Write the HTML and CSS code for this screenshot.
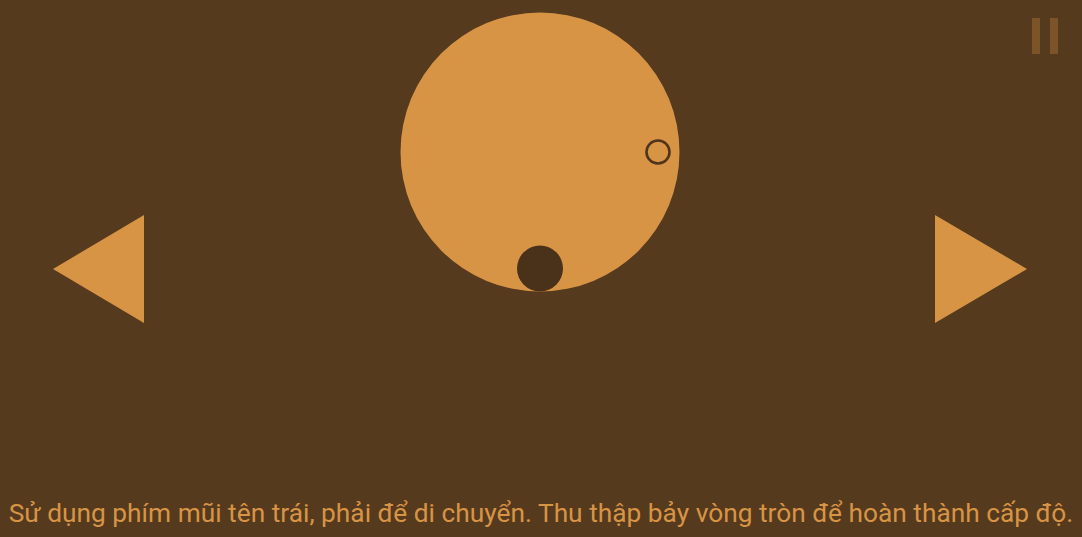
FILE: index.html
```html
<!DOCTYPE html>
<html lang="vi">
<head>
<meta charset="utf-8">
<title>Game</title>
<link rel="stylesheet" href="styles.css">
</head>
<body>
<div class="screen">
  <div class="stage">
    <svg class="board" width="1082" height="490" viewBox="0 0 1082 490">
      <circle cx="540" cy="152" r="139.5" fill="#d89445"/>
      <circle cx="658" cy="152" r="11.5" fill="none" stroke="#4f341b" stroke-width="2.6"/>
      <circle cx="540" cy="268.5" r="23" fill="#4a3119"/>
      <polygon points="53,269 144,215 144,323" fill="#d89445"/>
      <polygon points="935,215 1027,269 935,323" fill="#d89445"/>
    </svg>
    <button class="pause" aria-label="Tạm dừng">
      <span class="bar"></span><span class="bar"></span>
    </button>
  </div>
  <p class="hint">Sử dụng phím mũi tên trái, phải để di chuyển. Thu thập bảy vòng tròn để hoàn thành cấp độ.</p>
</div>
</body>
</html>
```
FILE: styles.css
```css
html, body {
  margin: 0;
  padding: 0;
  background: #553a1e;
}
.screen {
  width: 1082px;
  height: 537px;
  display: flex;
  flex-direction: column;
  background: #553a1e;
  overflow: hidden;
}
.stage {
  position: relative;
  height: 490px;
  flex: none;
}
.board {
  display: block;
}
.pause {
  position: absolute;
  top: 18px;
  right: 24px;
  display: flex;
  gap: 10px;
  padding: 0;
  margin: 0;
  border: 0;
  background: transparent;
}
.pause .bar {
  display: block;
  width: 8px;
  height: 36px;
  background: #7d5428;
}
.hint {
  margin: 0;
  font-family: Roboto, "Noto Sans", sans-serif;
  font-size: 26.3px;
  line-height: 47px;
  color: #d89445;
  text-align: center;
  white-space: nowrap;
}
```
